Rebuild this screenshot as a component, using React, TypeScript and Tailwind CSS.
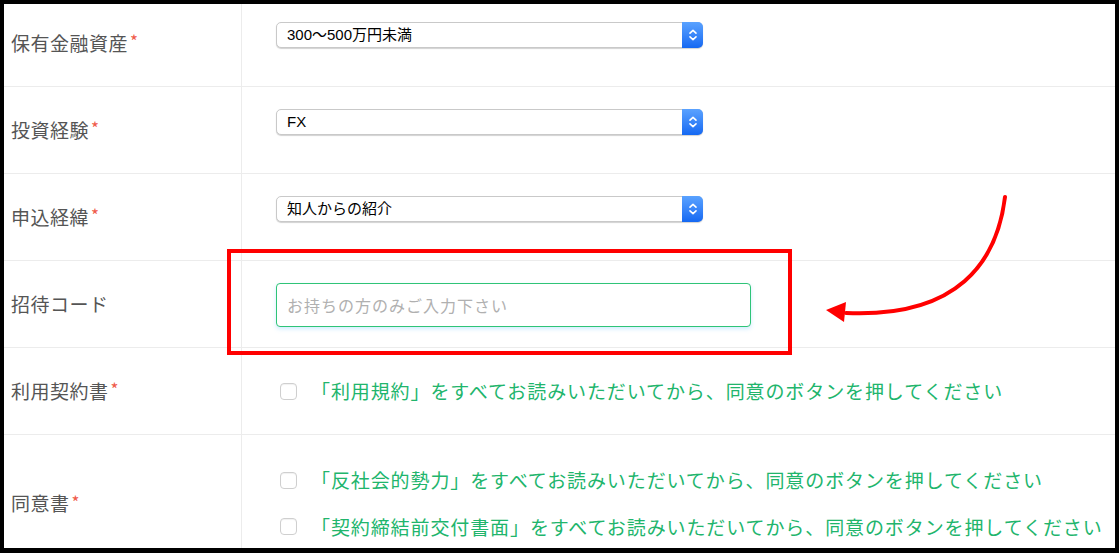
import React from "react";

const FONT = { fontFamily: '"Noto Sans CJK JP", "Noto Sans", sans-serif' };
const SEL_FONT = { fontFamily: '"Liberation Sans", "Noto Sans CJK JP", sans-serif' };

function Req() {
  return <span className="ml-[2px] -mt-[5px] text-[17px] leading-none text-[#ef5a4a]">*</span>;
}

function Select({ value }: { value: string }) {
  return (
    <div className="flex h-[26px] w-[427px] items-stretch rounded-[5px] border border-[#c9c9c9] bg-white shadow-[0_1px_1px_rgba(0,0,0,0.18)]">
      <div className="flex flex-1 items-center pl-[10px] text-[15px] text-black" style={SEL_FONT}>
        {value}
      </div>
      <div className="-my-[1px] -mr-[1px] flex w-[21px] items-center justify-center rounded-r-[5px] bg-gradient-to-b from-[#5aa2ff] to-[#1468f2]">
        <svg width="10" height="14" viewBox="0 0 10 14" fill="none">
          <path d="M2 5.2 L5 2.4 L8 5.2" stroke="white" strokeWidth="1.6" strokeLinecap="round" strokeLinejoin="round" />
          <path d="M2 8.8 L5 11.6 L8 8.8" stroke="white" strokeWidth="1.6" strokeLinecap="round" strokeLinejoin="round" />
        </svg>
      </div>
    </div>
  );
}

function Check({ text }: { text: string }) {
  return (
    <div className="flex items-center">
      <div className="ml-[4px] h-[17px] w-[17px] rounded-[4px] border border-[#cfcfcf] bg-white shadow-[inset_0_1px_1px_rgba(0,0,0,0.06)]" />
      <span className="ml-[14px] text-[19px] tracking-[0.9px] text-[#21b56c]">{text}</span>
    </div>
  );
}

function Row({
  label,
  req,
  h,
  align,
  children,
}: {
  label: string;
  req?: boolean;
  h: string;
  align: "top" | "center";
  children: React.ReactNode;
}) {
  return (
    <div className={`flex ${h} border-b border-[#ececec]`}>
      <div className="flex w-[238px] shrink-0 items-center border-r border-[#ececec] pl-[7px] text-[19px] tracking-[0.5px] text-[#555555]">
        {label}
        {req && <Req />}
      </div>
      <div className={`flex flex-1 pl-[34px] ${align === "top" ? "items-start pt-[22px]" : "items-center"}`}>
        {children}
      </div>
    </div>
  );
}

export default function App() {
  return (
    <div className="relative h-[553px] w-[1119px] overflow-hidden bg-black" style={FONT}>
      <div className="ml-[4px] mt-[4px] h-[544px] w-[1111px] overflow-hidden bg-white">
        <div className="-mt-[4px]">
          <Row label="保有金融資産" req h="h-[87px]" align="top">
            <Select value="300〜500万円未満" />
          </Row>
          <Row label="投資経験" req h="h-[87px]" align="top">
            <Select value="FX" />
          </Row>
          <Row label="申込経緯" req h="h-[87px]" align="top">
            <Select value="知人からの紹介" />
          </Row>
          <Row label="招待コード" h="h-[87px]" align="top">
            <div className="flex h-[44px] w-[475px] items-center rounded-[4px] border border-[#2fc477] bg-white pl-[10px] text-[16px] tracking-[1px] text-[#b0b0b0] shadow-[0_2px_4px_rgba(120,200,255,0.35)]">
              お持ちの方のみご入力下さい
            </div>
          </Row>
          <Row label="利用契約書" req h="h-[87px]" align="center">
            <Check text="「利用規約」をすべてお読みいただいてから、同意のボタンを押してください" />
          </Row>
          <div className="flex h-[137px]">
            <div className="flex w-[238px] shrink-0 items-center border-r border-[#ececec] pl-[7px] text-[19px] tracking-[0.5px] text-[#555555]">
              同意書
              <Req />
            </div>
            <div className="flex flex-1 flex-col justify-center gap-[18px] pl-[34px]">
              <Check text="「反社会的勢力」をすべてお読みいただいてから、同意のボタンを押してください" />
              <Check text="「契約締結前交付書面」をすべてお読みいただいてから、同意のボタンを押してください" />
            </div>
          </div>
        </div>
      </div>

      {/* red highlight box */}
      <div className="pointer-events-none absolute left-[227px] top-[249px] h-[106px] w-[565px] border-[4px] border-[#ff0000]" />

      {/* red arrow */}
      <svg className="pointer-events-none absolute left-0 top-0" width="1119" height="553" viewBox="0 0 1119 553">
        <path d="M1005 197 C997 262 958 318 846 313" stroke="#ff0000" strokeWidth="4" fill="none" strokeLinecap="round" />
        <path d="M826 310 L846 302 L844 322 Z" fill="#ff0000" />
      </svg>
    </div>
  );
}
